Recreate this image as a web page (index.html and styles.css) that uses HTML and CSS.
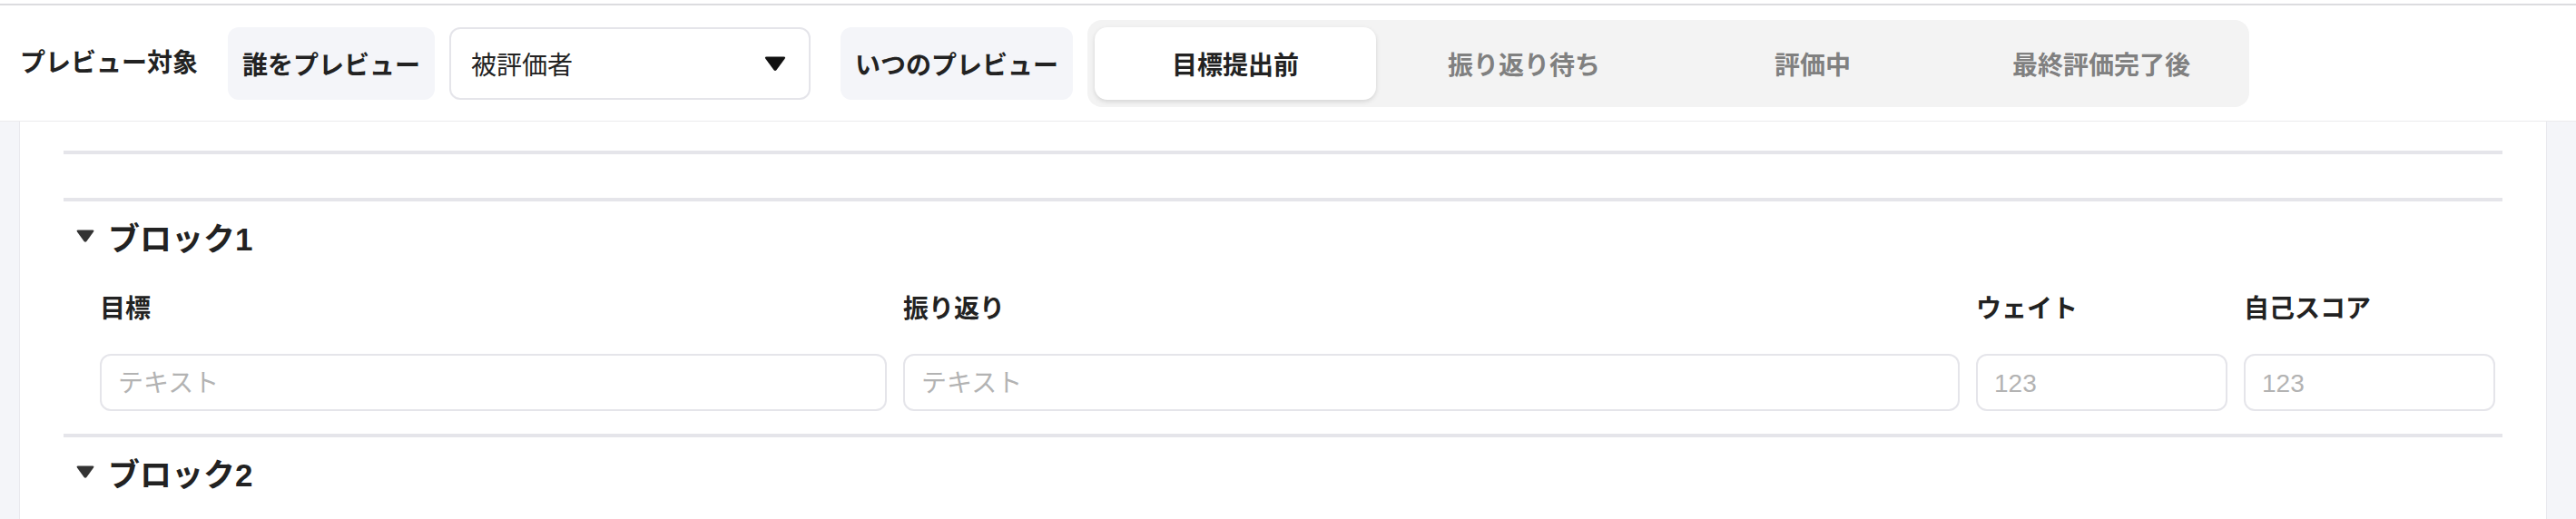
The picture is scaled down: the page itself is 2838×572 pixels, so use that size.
FILE: index.html
```html
<!DOCTYPE html>
<html lang="ja">
<head>
<meta charset="utf-8">
<title>プレビュー</title>
<link rel="stylesheet" href="styles.css">
</head>
<body>
<div class="topline"></div>
<header class="toolbar">
  <span class="toolbar-title">プレビュー対象</span>
  <div class="group">
    <span class="chip">誰をプレビュー</span>
    <div class="select">
      <span>被評価者</span>
      <svg class="caret" viewBox="0 0 24 16" width="24" height="16"><path d="M2.5 0.5 H21.5 Q24 0.5 22.6 2.8 L13.6 15 Q12 17 10.4 15 L1.4 2.8 Q0 0.5 2.5 0.5 Z"/></svg>
    </div>
  </div>
  <div class="group">
    <span class="chip">いつのプレビュー</span>
    <div class="segmented">
      <span class="seg active">目標提出前</span>
      <span class="seg">振り返り待ち</span>
      <span class="seg">評価中</span>
      <span class="seg">最終評価完了後</span>
    </div>
  </div>
</header>
<main class="canvas">
  <section class="panel">
    <div class="rule-block"></div>
    <div class="block">
      <div class="block-head">
        <svg class="toggle" viewBox="0 0 20 14" width="20" height="14"><path d="M2 0.5 H18 Q20.2 0.5 19 2.5 L11.4 13 Q10 14.6 8.6 13 L1 2.5 Q-0.2 0.5 2 0.5 Z"/></svg>
        <span>ブロック1</span>
      </div>
      <div class="fields">
        <label class="field"><span class="field-label">目標</span><input class="input" type="text" placeholder="テキスト"></label>
        <label class="field"><span class="field-label">振り返り</span><input class="input" type="text" placeholder="テキスト"></label>
        <label class="field"><span class="field-label">ウェイト</span><input class="input" type="text" placeholder="123"></label>
        <label class="field"><span class="field-label">自己スコア</span><input class="input" type="text" placeholder="123"></label>
      </div>
    </div>
    <div class="block">
      <div class="block-head">
        <svg class="toggle" viewBox="0 0 20 14" width="20" height="14"><path d="M2 0.5 H18 Q20.2 0.5 19 2.5 L11.4 13 Q10 14.6 8.6 13 L1 2.5 Q-0.2 0.5 2 0.5 Z"/></svg>
        <span>ブロック2</span>
      </div>
    </div>
  </section>
</main>
</body>
</html>
```

FILE: styles.css
```css
* { box-sizing: border-box; }

html, body { height: 100%; }

body {
  margin: 0;
  font-family: "Liberation Sans", "Noto Sans CJK JP", sans-serif;
  color: #222;
  background: #f4f5f9;
  display: flex;
  flex-direction: column;
  overflow: hidden;
}

.topline {
  height: 6px;
  background: #fff;
  border-bottom: 2px solid #dcdcdf;
}

.toolbar {
  height: 128px;
  background: #fff;
  border-bottom: 1px solid #ebebed;
  display: flex;
  align-items: center;
  padding-left: 22px;
  gap: 33px;
}

.toolbar-title {
  font-size: 28px;
  font-weight: 700;
  line-height: 40px;
  white-space: nowrap;
}

.group {
  display: flex;
  align-items: center;
  gap: 16px;
}

.chip {
  height: 80px;
  padding: 0 16px;
  display: flex;
  align-items: center;
  background: #f4f5f9;
  border-radius: 12px;
  font-size: 28px;
  font-weight: 700;
  white-space: nowrap;
}

.select {
  width: 398px;
  height: 80px;
  border: 2px solid #e5e5ea;
  border-radius: 12px;
  padding: 0 25px 0 22px;
  display: flex;
  align-items: center;
  justify-content: space-between;
  font-size: 28px;
  background: #fff;
}

.caret { fill: #111; }

.segmented {
  height: 96px;
  padding: 8px;
  background: #f3f3f3;
  border-radius: 16px;
  display: grid;
  grid-template-columns: repeat(4, 310px);
  column-gap: 8px;
}

.seg {
  height: 80px;
  display: flex;
  align-items: center;
  justify-content: center;
  border-radius: 14px;
  font-size: 28px;
  font-weight: 700;
  color: #808080;
  white-space: nowrap;
}

.seg.active {
  background: #fff;
  color: #222;
  box-shadow: 0 2px 5px rgba(0, 0, 0, 0.13);
}

.canvas {
  flex: 1;
  display: flex;
  padding: 0 32px 0 21px;
}

.panel {
  flex: 1;
  background: #fff;
  border-left: 1px solid #e9e9ee;
  border-right: 1px solid #e9e9ee;
  padding: 32px 48px 0 48px;
}

.rule-block {
  border-top: 4px solid #e5e5ea;
  height: 52px;
}

.block {
  border-top: 4px solid #e5e5ea;
}

.block-head {
  height: 76px;
  display: flex;
  align-items: center;
  gap: 15px;
  padding-left: 14px;
  font-size: 35px;
  font-weight: 700;
}

.toggle { fill: #333; flex: none; }

.fields {
  display: grid;
  grid-template-columns: 867px 1164px 277px 277px;
  column-gap: 18px;
  margin-left: 40px;
  padding: 23px 0 25px;
}

.field {
  display: flex;
  flex-direction: column;
}

.field-label {
  font-size: 28px;
  font-weight: 700;
  line-height: 40px;
  margin-bottom: 29px;
  white-space: nowrap;
}

.input {
  width: 100%;
  height: 63px;
  border: 2px solid #e5e5ea;
  border-radius: 12px;
  padding: 2px 18px 0;
  font-family: "Liberation Sans", "Noto Sans CJK JP", sans-serif;
  font-size: 28px;
  color: #222;
  background: #fff;
  outline: none;
}

.input::placeholder { color: #b3b3b3; }
```
